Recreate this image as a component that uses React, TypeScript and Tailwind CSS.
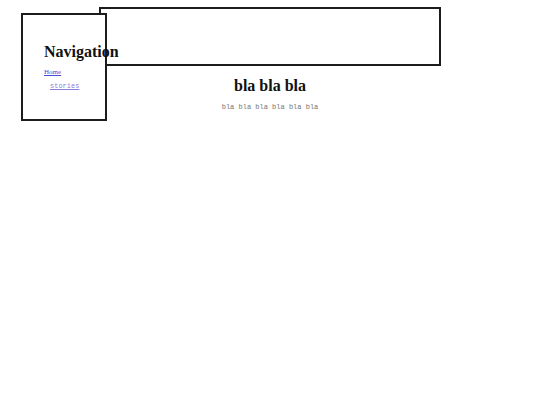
import React from 'react';

const serif = 'font-["Liberation_Serif",Georgia,serif]';
const mono = 'font-["Liberation_Mono","Courier_New",monospace]';

export default function App() {
  return (
    <div className="relative min-h-[405px] w-[540px] bg-white text-[#111]">
      {/* header box */}
      <div className="ml-[99px] pt-[7px]">
        <div className="h-[59px] w-[342px] border-2 border-[#1c1c1c]" />
      </div>

      {/* navigation box sits over the header */}
      <nav className="absolute left-[21px] top-[13px] z-10 h-[108px] w-[86px] border-2 border-[#1c1c1c] bg-white">
        <div className="whitespace-nowrap pl-[21px] pt-[27px]">
          <h2 className={`${serif} text-[16px] font-bold leading-[20px]`}>Navigation</h2>
          <div className="mt-[6px] flex flex-col">
            <a href="#" className={`${serif} text-[7px] leading-[9px] text-[#4a4ad8] underline`}>Home</a>
            <a href="#" className={`${mono} ml-[6px] mt-[5px] text-[7px] leading-[9px] text-[#8a80dc] underline`}>stories</a>
          </div>
        </div>
      </nav>

      <main className="text-center">
        <h1 className={`${serif} mt-[10px] text-[16px] font-bold leading-[20px]`}>bla bla bla</h1>
        <p className={`${mono} mt-[7px] text-[7px] leading-[9px] text-[#777]`}>bla bla bla bla bla bla</p>
      </main>
    </div>
  );
}
